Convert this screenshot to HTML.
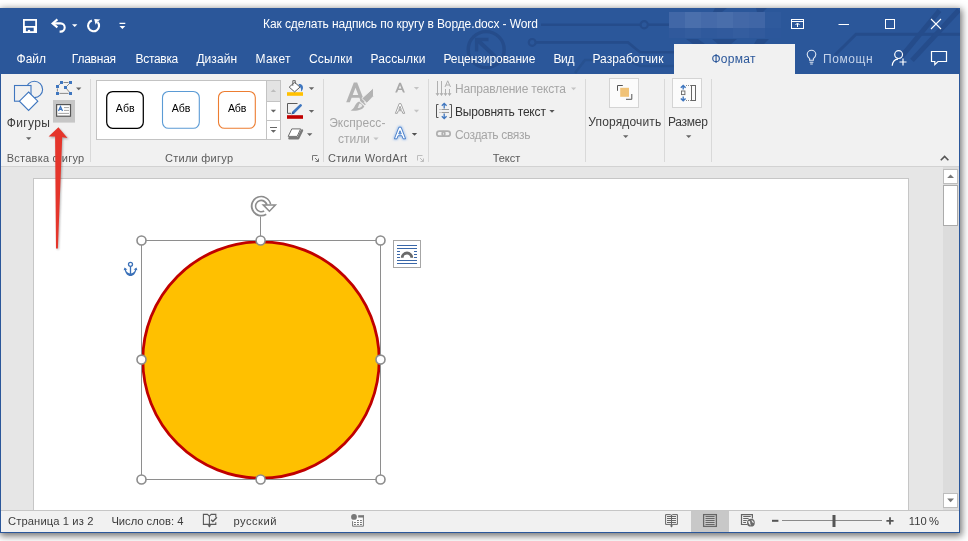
<!DOCTYPE html>
<html><head><meta charset="utf-8"><title>Word</title>
<style>
html,body{margin:0;padding:0;background:#fff;}
body{width:968px;height:541px;position:relative;overflow:hidden;font-family:"Liberation Sans",sans-serif;}
.a{position:absolute;}
.t{position:absolute;white-space:pre;font-family:"Liberation Sans",sans-serif;}
#win{position:absolute;left:0;top:8px;width:960px;height:525px;background:#e6e6e6;box-shadow:1px 2px 7px 1px rgba(0,0,0,.55);}
#title{position:absolute;left:0;top:8px;width:960px;height:66px;background:#2b579a;}
#ribbon{position:absolute;left:1px;top:74px;width:958px;height:92px;background:#f1f1f1;border-bottom:1px solid #d2d2d2;}
#fmt{position:absolute;left:674px;top:44px;width:121px;height:30px;background:#f1f1f1;}
#doc{position:absolute;left:1px;top:167px;width:958px;height:343px;background:#e6e6e6;}
#page{position:absolute;left:33px;top:178px;width:876px;height:332px;background:#fff;border:1px solid #c6c6c6;border-bottom:none;box-sizing:border-box;}
#status{position:absolute;left:1px;top:510px;width:958px;height:22px;background:#f1f1f1;border-top:1px solid #c6c6c6;box-sizing:border-box;}
#bl{position:absolute;left:0;top:74px;width:1px;height:459px;background:#2b579a;}
#br{position:absolute;left:959px;top:74px;width:1px;height:459px;background:#2b579a;}
#bb{position:absolute;left:0;top:532px;width:960px;height:1px;background:#2b579a;}
#tx{position:absolute;left:0;top:0;width:968px;height:541px;will-change:transform;}
.sep{position:absolute;width:1px;background:#dadada;top:79px;height:83px;}
</style></head><body>
<div id="win"></div>
<div id="title"></div>
<div id="fmt"></div>
<div id="ribbon"></div>
<div id="doc"></div>
<div id="page"></div>
<div id="status"></div>
<div id="bl"></div><div id="br"></div><div id="bb"></div>
<svg class="a" style="left:0;top:0" width="968" height="541" viewBox="0 0 968 541">
<!-- title bar pattern -->
<defs><clipPath id="tc"><rect x="0" y="8" width="960" height="66"/></clipPath></defs>
<g stroke="#254c8b" fill="none" clip-path="url(#tc)">
 <circle cx="486.2" cy="49.6" r="18" stroke-width="3.4"/>
 <path d="M495 56.5L477.5 40" stroke-width="4"/>
 <path d="M488.5 39.5H476.6V51.5" stroke-width="3.4"/>
 <path d="M541 24.7H640" stroke-width="2.6"/><circle cx="644.2" cy="24.7" r="3.6" stroke-width="2.2"/><path d="M648 24.7H670" stroke-width="2.6"/>
 <circle cx="532.2" cy="42.4" r="3.4" stroke-width="2.2"/><path d="M536 42.4H628L640 52.3H674" stroke-width="2.6"/>
 <path d="M575 73L585 60H628L640 66H674" stroke-width="2.6" opacity=".6"/>
 <path d="M960 34.2H856L835 55" stroke-width="3"/>
 <path d="M939.5 10.5L901.5 56.6" stroke-width="5"/>
 <path d="M958.8 10L912 60.4" stroke-width="5"/>
</g>
<rect x="0" y="0" width="968" height="8" fill="#fff" opacity="0"/>
<g fill="#254c8b"><path d="M715 8H727L722 12H713zM756 8H767L763 12H757zM686 39H698L705 44H693zM712 39H737L731 44H718zM757 39H769L764 44H754z"/></g>
<!-- blurred user name -->
<g>
 <rect x="669" y="12" width="16" height="16" fill="#4167a7"/>
 <rect x="685" y="12" width="16" height="16" fill="#4a6fac"/>
 <rect x="701" y="12" width="16" height="16" fill="#456aa9"/>
 <rect x="717" y="12" width="16" height="16" fill="#496eab"/>
 <rect x="733" y="12" width="16" height="16" fill="#4368a7"/>
 <rect x="749" y="12" width="16" height="16" fill="#4066a6"/>
 <rect x="765" y="12" width="16" height="16" fill="#2f5a9d"/>
 <rect x="669" y="28" width="16" height="10" fill="#30599c"/>
 <rect x="685" y="28" width="16" height="10" fill="#335c9e"/>
 <rect x="701" y="28" width="16" height="10" fill="#2f599c"/>
 <rect x="717" y="28" width="16" height="10" fill="#315a9d"/>
 <rect x="733" y="28" width="16" height="10" fill="#345d9f"/>
 <rect x="749" y="28" width="16" height="10" fill="#315a9d"/>
 <rect x="765" y="28" width="16" height="10" fill="#2c579b"/>
</g>
<!-- QAT icons -->
<g fill="none" stroke="#fff">
 <!-- save -->
 <rect x="23.9" y="19.9" width="12.2" height="12.2" stroke-width="1.8"/>
 <rect x="24" y="26" width="12" height="1.7" fill="#fff" stroke="none"/>
 <rect x="27.9" y="29.9" width="2.2" height="2.4" fill="#fff" stroke="none"/>
 <rect x="23" y="27" width="2.9" height="6" fill="#fff" stroke="none"/>
 <rect x="33.7" y="27" width="3.3" height="6" fill="#fff" stroke="none"/>
 <!-- undo -->
 <path d="M53 23.4H60.6A4.1 4.1 0 0 1 60.6 31.6H59.6" stroke-width="2.1"/>
 <path d="M57.4 19.4L52.6 23.4L57.4 27.4" stroke-width="2.1"/>
 <!-- redo/repeat -->
 <path d="M91.9 20.5A5.5 5.5 0 1 0 97.6 22" stroke-width="2.1"/>
 <path d="M94.2 18.9L100.4 19.5L97.6 21.6L95.6 24.8z" fill="#fff" stroke="none"/>
</g>
<path d="M72 24.3H77.4L74.7 27z" fill="#fff"/>
<path d="M119.5 22.8H125.3V24H119.5z M119.5 26H125.3L122.4 29z" fill="#fff"/>
<!-- window controls -->
<g fill="none" stroke="#fff" stroke-width="1">
 <rect x="791.5" y="19.5" width="12" height="9"/>
 <path d="M791.5 21.5H803.5"/>
 <path d="M797.5 27V23.5M795.5 25L797.5 23L799.5 25"/>
 <path d="M838.5 24.5H849"/>
 <rect x="885.5" y="19.5" width="9" height="9"/>
 <path d="M931 19L941 29M941 19L931 29" stroke-width="1.1"/>
</g>
<!-- lightbulb -->
<g fill="none" stroke="#dfe7f3" stroke-width="1.1">
 <path d="M809.6 60.2V58.6C807.8 57.2 807.2 55.8 807.2 54.6A4.3 4.3 0 0 1 815.8 54.6C815.8 55.8 815.2 57.2 813.4 58.6V60.2z"/>
 <path d="M809.6 62.2H813.4M810.2 64H812.8"/>
</g>
<!-- share -->
<g fill="none" stroke="#fff" stroke-width="1.2">
 <circle cx="898.6" cy="54.6" r="3.9"/>
 <path d="M892.2 65.8C892.6 61.5 895 59.3 898 59.1"/>
 <path d="M903 58.5V65.5M899.5 62H906.5"/>
</g>
<!-- comment -->
<path d="M931.5 51.5H946.5V61.5H938L934.8 64.6V61.5H931.5z" fill="none" stroke="#fff" stroke-width="1.2"/>
</svg>
<svg class="a" style="left:0;top:0" width="968" height="541" viewBox="0 0 968 541">
<!-- separators -->
<g fill="#d9d9d9">
 <rect x="90" y="79" width="1" height="83"/>
 <rect x="323" y="79" width="1" height="83"/>
 <rect x="428" y="79" width="1" height="83"/>
 <rect x="585" y="79" width="1" height="83"/>
 <rect x="664" y="79" width="1" height="83"/>
 <rect x="711" y="79" width="1" height="83"/>
</g>
<!-- Shapes big icon -->
<g fill="#fff" stroke="#3f76bf" stroke-width="1.1">
 <circle cx="34.4" cy="89.4" r="8.2" fill="#f1f1f1"/>
 <rect x="14.5" y="85.5" width="16.5" height="15.7" fill="#f1f1f1"/>
 <path d="M28.6 92L37.8 101.2L28.6 110.5L19.4 101.2z" fill="#fff"/>
</g>
<path d="M26 137.2H31.4L28.7 140z" fill="#666"/>
<!-- edit shape icon -->
<g stroke="#8a8a8a" stroke-width="1" fill="none">
 <path d="M63.5 82.5H68.5" />
 <path d="M70.5 82.5L65.5 87.5L70.5 93.4M59.5 93.4H68.5" />
 <path d="M57.4 88.5V91.5M58.5 85.3L60.4 83.6" />
</g>
<g fill="#3f76bf">
 <rect x="60" y="81" width="3" height="3"/><rect x="69" y="81" width="3" height="3"/>
 <rect x="56" y="85" width="3" height="3"/><rect x="64" y="86" width="3" height="3"/>
 <rect x="56" y="92" width="3" height="3"/><rect x="69" y="92" width="3" height="3"/>
</g>
<path d="M76 87.4H81.4L78.7 90.2z" fill="#666"/>
<!-- text box icon (highlighted) -->
<rect x="53" y="100" width="22" height="22.6" fill="#c6c6c6"/>
<rect x="56.6" y="104.6" width="13.9" height="11.6" fill="#fff" stroke="#555" stroke-width="1.2"/>
<path d="M58.5 110.9L60.5 106.5L62.5 110.9M59.2 109.4H61.8" stroke="#3f76bf" stroke-width="1.3" fill="none"/>
<path d="M64 107.6H69M64 110.4H69M58.3 113.4H69" stroke="#9a9a9a" stroke-width="0.9"/>
<!-- gallery -->
<rect x="96.5" y="80.5" width="184" height="59" fill="#fff" stroke="#c3c3c3"/>
<rect x="267" y="81" width="13" height="20" fill="#e3e3e3"/>
<path d="M266.5 80.5V139.5M266.5 101.5H280.5M266.5 120.5H280.5" stroke="#c3c3c3" fill="none"/>
<path d="M270.7 92H276.1L273.4 89.2z" fill="#bdbdbd"/>
<path d="M270.7 109.8H276.1L273.4 112.6z" fill="#666"/>
<path d="M270 127H277V128H270z M270.7 130H276.1L273.4 132.8z" fill="#666"/>
<rect x="106.7" y="91.5" width="36.6" height="36.8" rx="6" fill="#fff" stroke="#000" stroke-width="1.25"/>
<rect x="162.5" y="91.5" width="36.8" height="36.8" rx="6" fill="#fff" stroke="#5b9bd5" stroke-width="1.1"/>
<rect x="218.5" y="91.5" width="36.8" height="36.8" rx="6" fill="#fff" stroke="#ed7d31" stroke-width="1.1"/>
<!-- fill icon -->
<rect x="287" y="92.2" width="16" height="3.6" fill="#ffc000"/>
<path d="M294.6 82.3L300 87.1L294.6 91.9L289.2 87.1z" fill="#fff" stroke="#5e5e5e" stroke-width="1"/>
<path d="M292.8 85.8V80.6H295.3V84" fill="none" stroke="#5e5e5e" stroke-width="0.9"/>
<path d="M298.4 84.1C301.4 83.6 303.5 85.9 302.9 88.6C302.6 90 301.9 91 300.9 91.7C301.3 90 301.1 88.3 300.3 87.4z" fill="#3f76bf"/>
<path d="M308.8 87.3H314.2L311.5 90.1z" fill="#666"/>
<!-- outline icon -->
<rect x="287" y="115.2" width="16" height="3.6" fill="#c00000"/>
<path d="M297.5 103.5H287.5V113.3H291" fill="none" stroke="#5a5a5a" stroke-width="1"/>
<path d="M293.6 112.2L300.6 105.4" stroke="#3f76bf" stroke-width="2.7" stroke-linecap="round"/>
<path d="M291.4 114.4L292.3 111.4L294.6 113.6z" fill="#2f5f9f"/>
<path d="M308.8 109.9H314.2L311.5 112.7z" fill="#666"/>
<!-- effects icon -->
<path d="M289.4 138.2H298.2L302 130.4" fill="none" stroke="#7a7a7a" stroke-width="2.4" stroke-linejoin="round" stroke-linecap="round"/>
<path d="M291.8 128.9H300.6L297.2 136.4H288.2z" fill="#fff" stroke="#6e6e6e" stroke-width="1" stroke-linejoin="round"/>
<path d="M307 133.2H312.4L309.7 136z" fill="#666"/>
<!-- dialog launchers -->
<g fill="none" stroke="#777" stroke-width="1">
 <path d="M312.5 160.5V155.5H317.5"/><path d="M315 158L318.5 161.5M318.5 158.5V161.5H315.5"/>
</g>
<g fill="none" stroke="#bdbdbd" stroke-width="1">
 <path d="M417.5 160.5V155.5H422.5"/><path d="M420 158L423.5 161.5M423.5 158.5V161.5H420.5"/>
</g>
<!-- wordart big A + brush -->
<defs><filter id="gl" x="-40%" y="-40%" width="180%" height="180%"><feGaussianBlur stdDeviation="0.9"/></filter></defs>
<path d="M346.20 102.20L353.83 82.50H357.17L364.80 102.20H361.10L359.39 97.80H351.61L349.90 102.20zM352.69 95.00L355.50 87.75L358.31 95.00z" fill="#b3b3b3" fill-rule="evenodd"/>
<path d="M373.5 87.8V96.2L366.8 103.2L361.8 98.4z" fill="#b3b3b3" stroke="#f1f1f1" stroke-width="1"/>
<path d="M360.9 99.4L365.8 104.2L364.9 105.3L359.9 100.5z" fill="#b3b3b3"/>
<path d="M359.2 101.4L364.3 106.2C363 109.8 357 111.3 350.6 110.5C355.3 108.2 354.6 103 359.2 101.4z" fill="#b3b3b3"/>
<path d="M359.6 103.4C361.2 103.6 362.3 104.8 362.3 106C361.2 107.4 359.2 108.2 357.6 108C358.5 106.6 358.6 104.8 359.6 103.4z" fill="#e9e9e9"/>
<path d="M373.4 137.5H378.6L376 140.2z" fill="#c4c4c4"/>
<!-- small A's -->
<path d="M395.20 92.60L399.19 82.70H400.90L404.90 92.60H403.00L401.95 90.00H398.15L397.10 92.60zM398.71 88.60L400.05 85.29L401.39 88.60z" fill="#a9a9a9" fill-rule="evenodd"/>
<path d="M413.9 87H419.1L416.5 89.7z" fill="#c4c4c4"/>
<path d="M395.40 113.30L399.19 103.60H400.90L404.70 113.30H402.80L401.78 110.70H398.32L397.30 113.30zM398.83 109.40L400.05 106.27L401.27 109.40z" fill="#fff" stroke="#9a9a9a" stroke-width="0.9" fill-rule="evenodd"/>
<path d="M413.9 109.8H419.1L416.5 112.5z" fill="#c4c4c4"/>
<path d="M394.40 138.80L398.88 127.20H401.12L405.60 138.80H403.10L401.90 135.70H398.10L396.90 138.80zM398.75 134.00L400.00 130.76L401.25 134.00z" fill="#a9c6ee" stroke="#a9c6ee" stroke-width="2.4" stroke-linejoin="round" filter="url(#gl)"/>
<path d="M394.40 138.80L398.88 127.20H401.12L405.60 138.80H403.10L401.90 135.70H398.10L396.90 138.80zM398.75 134.00L400.00 130.76L401.25 134.00z" fill="#fff" stroke="#3f78c6" stroke-width="0.9" fill-rule="evenodd"/>
<path d="M411.8 133H417.2L414.5 135.8z" fill="#505050"/>
<!-- text direction icon -->
<g stroke="#b0b0b0" stroke-width="1" fill="none">
 <path d="M437.5 81V95M441.5 81V95M445.5 89V95M449.5 89V95"/>
 <path d="M436 93L437.5 95.5L439 93M440 93L441.5 95.5L443 93M444 93L445.5 95.5L447 93M448 93L449.5 95.5L451 93"/>
 <path d="M445 87L447.7 80.8L450.5 87M445.9 85H449.6" stroke-width="1"/>
</g>
<!-- align text icon -->
<g stroke="#555" stroke-width="1" fill="none">
 <path d="M438.5 104.5H436.5V117.5H438.5M449.5 104.5H451.5V117.5H449.5"/>
</g>
<path d="M439.5 109.5H449M439.5 112.5H449" stroke="#9a9a9a" stroke-width="1" stroke-dasharray="1 1 8 0"/>
<g stroke="#3f76bf" stroke-width="1.3" fill="none">
 <path d="M444.2 108.4V103.6M441.8 105.8L444.2 103.4L446.6 105.8"/>
 <path d="M444.2 113.6V118.4M441.8 116.2L444.2 118.6L446.6 116.2"/>
</g>
<!-- link icon -->
<g stroke="#b0b0b0" stroke-width="1.7" fill="none">
 <rect x="436.8" y="131.2" width="8" height="5" rx="2.5"/>
 <rect x="442.2" y="131.2" width="8" height="5" rx="2.5"/>
</g>
<path d="M571 87.5H576.2L573.6 90.2z" fill="#c4c4c4"/>
<path d="M549.4 110H554.6L552 112.7z" fill="#555"/>
<!-- arrange -->
<rect x="609.5" y="78.5" width="29" height="29" fill="#fbfbfb" stroke="#d4d4d4"/>
<rect x="620.2" y="87.8" width="8.8" height="9" fill="#f0c277"/>
<path d="M622.8 85.5H617.5V90.8M626 99.3H631.8V94" stroke="#555" fill="none" stroke-width="1"/>
<path d="M623 135.2H628.4L625.7 138z" fill="#666"/>
<!-- size -->
<rect x="672.5" y="78.5" width="29" height="29" fill="#fbfbfb" stroke="#d4d4d4"/>
<rect x="691.5" y="85.5" width="4" height="15" fill="none" stroke="#666"/>
<rect x="681.5" y="91" width="3.4" height="3.6" fill="none" stroke="#666" stroke-width="0.9"/>
<path d="M686 85.5H691M686 100.5H691" stroke="#888" stroke-dasharray="1 1"/>
<g stroke="#3f76bf" stroke-width="1.4" fill="none">
 <path d="M683.2 89.6V85.6M680.8 87.8L683.2 85.4L685.6 87.8"/>
 <path d="M683.2 96.6V100.6M680.8 98.4L683.2 100.8L685.6 98.4"/>
</g>
<path d="M686 135.2H691.4L688.7 138z" fill="#666"/>
<!-- collapse chevron -->
<path d="M940.8 160.2L944.6 156.4L948.4 160.2" stroke="#555" stroke-width="1.6" fill="none"/>
</svg>
<svg class="a" style="left:0;top:0" width="968" height="541" viewBox="0 0 968 541">
<defs><filter id="sh" x="-50%" y="-10%" width="200%" height="120%"><feGaussianBlur stdDeviation="1.2"/></filter></defs>
<!-- scrollbar -->
<rect x="943" y="167" width="16" height="343" fill="#dcdcdc"/>
<rect x="943.5" y="169.5" width="14" height="14" fill="#fff" stroke="#bdbdbd"/>
<path d="M947.2 178H954L950.6 174.4z" fill="#777"/>
<rect x="943.5" y="185.5" width="14" height="40" fill="#fff" stroke="#ababab"/>
<rect x="943.5" y="493.5" width="14" height="14" fill="#fff" stroke="#bdbdbd"/>
<path d="M947.2 498.6H954L950.6 502.2z" fill="#777"/>
<!-- circle shape -->
<circle cx="261" cy="360" r="118.2" fill="#ffc000" stroke="#c00000" stroke-width="2.8"/>
<!-- selection frame -->
<rect x="141.5" y="240.5" width="239" height="239" fill="none" stroke="#8e8e8e" stroke-width="1"/>
<path d="M260.5 216.5V236" stroke="#8e8e8e" stroke-width="1"/>
<g fill="#fff" stroke="#8c8c8c" stroke-width="1.6">
 <circle cx="141.5" cy="240.5" r="4.5"/><circle cx="260.6" cy="240.5" r="4.5"/><circle cx="380.5" cy="240.5" r="4.5"/>
 <circle cx="141.5" cy="359.6" r="4.5"/><circle cx="380.5" cy="359.6" r="4.5"/>
 <circle cx="141.5" cy="479.5" r="4.5"/><circle cx="260.6" cy="479.5" r="4.5"/><circle cx="380.5" cy="479.5" r="4.5"/>
</g>
<!-- rotate handle -->
<g fill="none" stroke-linecap="butt">
 <path d="M268.6 204.6A7.6 7.6 0 1 0 265.2 212.6" stroke="#8c8c8c" stroke-width="5.6"/>
 <path d="M268.9 205.4A7.6 7.6 0 1 0 265.6 212.3" stroke="#fff" stroke-width="2.2"/>
</g>
<path d="M263.2 204.9H275.4L269.4 211.2z" fill="#fff" stroke="#8c8c8c" stroke-width="1.5" stroke-linejoin="miter"/>
<!-- anchor -->
<g fill="none" stroke="#3a70b8" stroke-width="1.3">
 <circle cx="130.5" cy="264.3" r="2"/>
 <path d="M130.5 266.4V275"/>
</g>
<path d="M124.5 268.6C125 273.6 127.8 276.1 130.5 276.1C133.2 276.1 136 273.6 136.5 268.6L135.2 269.8C134.4 272.3 132.5 273.5 130.5 273.5C128.5 273.5 126.6 272.3 125.8 269.8z" fill="#3a70b8"/>
<path d="M123.6 270.2L124.6 267.4L127.4 269.4zM133.6 269.4L136.4 267.4L137.4 270.2z" fill="#3a70b8"/>
<!-- layout options -->
<rect x="393.5" y="240.5" width="27" height="27" fill="#fff" stroke="#a6a6a6"/>
<g stroke="#3a67a8" stroke-width="1">
 <path d="M397 245.5H417M397 248.5H417M397 260.5H417M397 263.5H417"/>
 <path d="M397 251.5H400M397 254.5H400M397 257.5H400M414 251.5H417M414 254.5H417M414 257.5H417"/>
</g>
<path d="M402.2 257.8A4.8 4.8 0 0 1 411.8 257.8" fill="none" stroke="#6a6a6a" stroke-width="2.8"/>
<!-- status bar icons -->
<g fill="none" stroke="#5a5a5a" stroke-width="1.1">
 <path d="M209.4 516.2L207.4 514.4H203.4V524.4H209.4"/>
 <path d="M209.4 515.8V526.6"/>
 <path d="M209.4 516.2L211.2 514.4H215.8V517.2M215.8 522.2V524.4H209.4"/>
 <path d="M211.2 519.8L212.9 521.5L216.9 517.3" stroke-width="1.5"/>
</g>
<path d="M207.6 525.2H211.2L209.4 527.4z" fill="#5a5a5a"/>
<!-- macro icon -->
<path d="M353 517.5H363V526H353z" fill="#fbfbfb"/>
<circle cx="354" cy="516.9" r="2.9" fill="#777"/>
<rect x="358.2" y="515.2" width="5.7" height="2.3" fill="#777"/>
<path d="M352.6 521.2V526.2H363.4V515.4" fill="none" stroke="#777" stroke-width="1"/>
<g fill="#777">
 <rect x="357" y="520" width="1.9" height="1"/><rect x="360" y="520" width="1.9" height="1"/>
 <rect x="354" y="522" width="1.9" height="1"/><rect x="357" y="522" width="1.9" height="1"/><rect x="360" y="522" width="1.9" height="1"/>
 <rect x="354" y="524" width="1.9" height="1"/><rect x="357" y="524" width="1.9" height="1"/><rect x="360" y="524" width="1.9" height="1"/>
</g>
<!-- view icons -->
<rect x="691" y="511" width="38" height="21" fill="#c8c8c8"/>
<g fill="none" stroke="#666" stroke-width="1">
 <path d="M671.5 515.2L670.2 514.6H665.6V524.4H670.2L671.5 525L672.8 524.4H677.4V514.6H672.8z"/>
 <path d="M671.5 515V526.4"/>
 <path d="M667 516.5H676M667 518.5H676M667 520.5H676M667 522.5H676" stroke-width="1"/>
</g>
<path d="M669.8 525.4H673.2L671.5 527.4z" fill="#666"/>
<g fill="none" stroke="#666">
 <rect x="703.6" y="514.6" width="12.8" height="11.8" stroke-width="1.25"/>
 <path d="M705.5 516.5H714.6M705.5 518.5H714.6M705.5 520.5H714.6M705.5 522.5H714.6M705.5 524.5H714.6" stroke-width="1"/>
 <path d="M747.5 524.5H741.5V514.6H752.4V518.6" stroke-width="1.2"/>
 <path d="M743.2 516.5H750.8M743.2 518.5H748.6M743.2 520.5H746.8M743.2 522.5H746" stroke-width="1"/>
</g>
<circle cx="750.9" cy="522.7" r="3.9" fill="#6a6a6a"/>
<path d="M748.3 521.2C749.6 520.8 750.4 521.6 750.2 522.6C750 523.6 750.8 524.2 750.6 525.4C749.4 524.8 748.2 523.2 748.3 521.2zM751.6 520C752.6 520.4 753.6 521.4 753.8 522.8C753 523.2 752.4 522.6 752.2 521.8C752 521.2 751.4 520.8 751.6 520z" fill="#f4f4f4"/>
<!-- zoom slider -->
<rect x="772" y="519.8" width="6.4" height="2" fill="#555"/>
<rect x="782" y="520" width="100" height="1" fill="#8a8a8a"/>
<rect x="832.5" y="515" width="3" height="12" fill="#555"/>
<path d="M886.4 520.8H893.6M890 517.2V524.4" stroke="#555" stroke-width="1.8" fill="none"/>
</svg>

<div id="tx"><div class="t" style="left:263.1px;top:18.4px;font-size:12px;line-height:12px;color:#ffffff;font-weight:400;letter-spacing:-0.097px">Как сделать надпись по кругу в Ворде.docx - Word</div>
<div class="t" style="left:16.6px;top:52.8px;font-size:12px;line-height:12px;color:#ffffff;font-weight:400;letter-spacing:-0.039px">Файл</div>
<div class="t" style="left:71.8px;top:52.8px;font-size:12px;line-height:12px;color:#ffffff;font-weight:400;letter-spacing:-0.231px">Главная</div>
<div class="t" style="left:135.6px;top:52.8px;font-size:12px;line-height:12px;color:#ffffff;font-weight:400;letter-spacing:-0.318px">Вставка</div>
<div class="t" style="left:196.4px;top:52.8px;font-size:12px;line-height:12px;color:#ffffff;font-weight:400;letter-spacing:0.071px">Дизайн</div>
<div class="t" style="left:255.6px;top:52.8px;font-size:12px;line-height:12px;color:#ffffff;font-weight:400;letter-spacing:0.208px">Макет</div>
<div class="t" style="left:308.9px;top:52.8px;font-size:12px;line-height:12px;color:#ffffff;font-weight:400;letter-spacing:0.250px">Ссылки</div>
<div class="t" style="left:370.4px;top:52.8px;font-size:12px;line-height:12px;color:#ffffff;font-weight:400;letter-spacing:0.163px">Рассылки</div>
<div class="t" style="left:443.4px;top:52.8px;font-size:12px;line-height:12px;color:#ffffff;font-weight:400;letter-spacing:-0.052px">Рецензирование</div>
<div class="t" style="left:553.4px;top:52.8px;font-size:12px;line-height:12px;color:#ffffff;font-weight:400;letter-spacing:-0.359px">Вид</div>
<div class="t" style="left:592.4px;top:52.8px;font-size:12px;line-height:12px;color:#ffffff;font-weight:400;letter-spacing:0.102px">Разработчик</div>
<div class="t" style="left:711.4px;top:52.8px;font-size:12px;line-height:12px;color:#2b579a;font-weight:400;letter-spacing:0.272px">Формат</div>
<div class="t" style="left:823.0px;top:52.8px;font-size:12px;line-height:12px;color:#c5d3ea;font-weight:400;letter-spacing:0.593px">Помощн</div>
<div class="t" style="left:6.8px;top:116.8px;font-size:12px;line-height:12px;color:#3c3c3c;font-weight:400;letter-spacing:0.365px">Фигуры</div>
<div class="t" style="left:6.8px;top:153.0px;font-size:11px;line-height:11px;color:#5a5a5a;font-weight:400;letter-spacing:0.229px">Вставка фигур</div>
<div class="t" style="left:115.8px;top:103.0px;font-size:10.6px;line-height:10.6px;color:#000;font-weight:400;letter-spacing:0.017px">Абв</div>
<div class="t" style="left:171.8px;top:103.0px;font-size:10.6px;line-height:10.6px;color:#000;font-weight:400;letter-spacing:-0.083px">Абв</div>
<div class="t" style="left:227.9px;top:103.0px;font-size:10.6px;line-height:10.6px;color:#000;font-weight:400;letter-spacing:-0.083px">Абв</div>
<div class="t" style="left:165.0px;top:153.0px;font-size:11px;line-height:11px;color:#5a5a5a;font-weight:400;letter-spacing:0.255px">Стили фигур</div>
<div class="t" style="left:329.2px;top:116.8px;font-size:12px;line-height:12px;color:#a6a6a6;font-weight:400;letter-spacing:0.043px">Экспресс-</div>
<div class="t" style="left:338.1px;top:132.7px;font-size:12px;line-height:12px;color:#a6a6a6;font-weight:400;letter-spacing:-0.052px">стили</div>
<div class="t" style="left:327.9px;top:153.0px;font-size:11px;line-height:11px;color:#5a5a5a;font-weight:400;letter-spacing:0.351px">Стили WordArt</div>
<div class="t" style="left:455.0px;top:83.0px;font-size:12px;line-height:12px;color:#a6a6a6;font-weight:400;letter-spacing:-0.163px">Направление текста</div>
<div class="t" style="left:455.0px;top:105.7px;font-size:12px;line-height:12px;color:#333;font-weight:400;letter-spacing:-0.185px">Выровнять текст</div>
<div class="t" style="left:455.0px;top:128.6px;font-size:12px;line-height:12px;color:#a6a6a6;font-weight:400;letter-spacing:-0.336px">Создать связь</div>
<div class="t" style="left:492.8px;top:153.1px;font-size:11px;line-height:11px;color:#5a5a5a;font-weight:400;letter-spacing:-0.076px">Текст</div>
<div class="t" style="left:588.3px;top:115.6px;font-size:12px;line-height:12px;color:#3c3c3c;font-weight:400;letter-spacing:0.148px">Упорядочить</div>
<div class="t" style="left:667.9px;top:115.6px;font-size:12px;line-height:12px;color:#3c3c3c;font-weight:400;letter-spacing:-0.230px">Размер</div>
<div class="t" style="left:8.0px;top:515.5px;font-size:11.2px;line-height:11.2px;color:#3c3c3c;font-weight:400;letter-spacing:0.110px">Страница 1 из 2</div>
<div class="t" style="left:111.4px;top:515.5px;font-size:11.2px;line-height:11.2px;color:#3c3c3c;font-weight:400;letter-spacing:-0.012px">Число слов: 4</div>
<div class="t" style="left:233.4px;top:515.5px;font-size:11.2px;line-height:11.2px;color:#3c3c3c;font-weight:400;letter-spacing:0.474px">русский</div>
<div class="t" style="left:908.8px;top:515.5px;font-size:11.2px;line-height:11.2px;color:#3c3c3c;font-weight:400;letter-spacing:0.028px">110</div>
<div class="t" style="left:929.1px;top:515.5px;font-size:11.2px;line-height:11.2px;color:#3c3c3c;font-weight:400;letter-spacing:0.000px">%</div></div>
<svg class="a" style="left:0;top:0" width="968" height="541" viewBox="0 0 968 541">
<defs><filter id="sh2" x="-50%" y="-10%" width="200%" height="120%"><feGaussianBlur stdDeviation="1.2"/></filter></defs>
<g filter="url(#sh2)" opacity="0.3"><path d="M59.4 128.8L68.8 139.2L63 138.4L58.8 249.6H57L56 137.8L49.6 137.7z" fill="#000"/></g>
<path d="M58.4 127.3L67.5 137.9L62.2 137.2L57.9 248.4H56L55.1 136.6L48.6 136.5z" fill="#e5352b"/>
</svg>

</body></html>
